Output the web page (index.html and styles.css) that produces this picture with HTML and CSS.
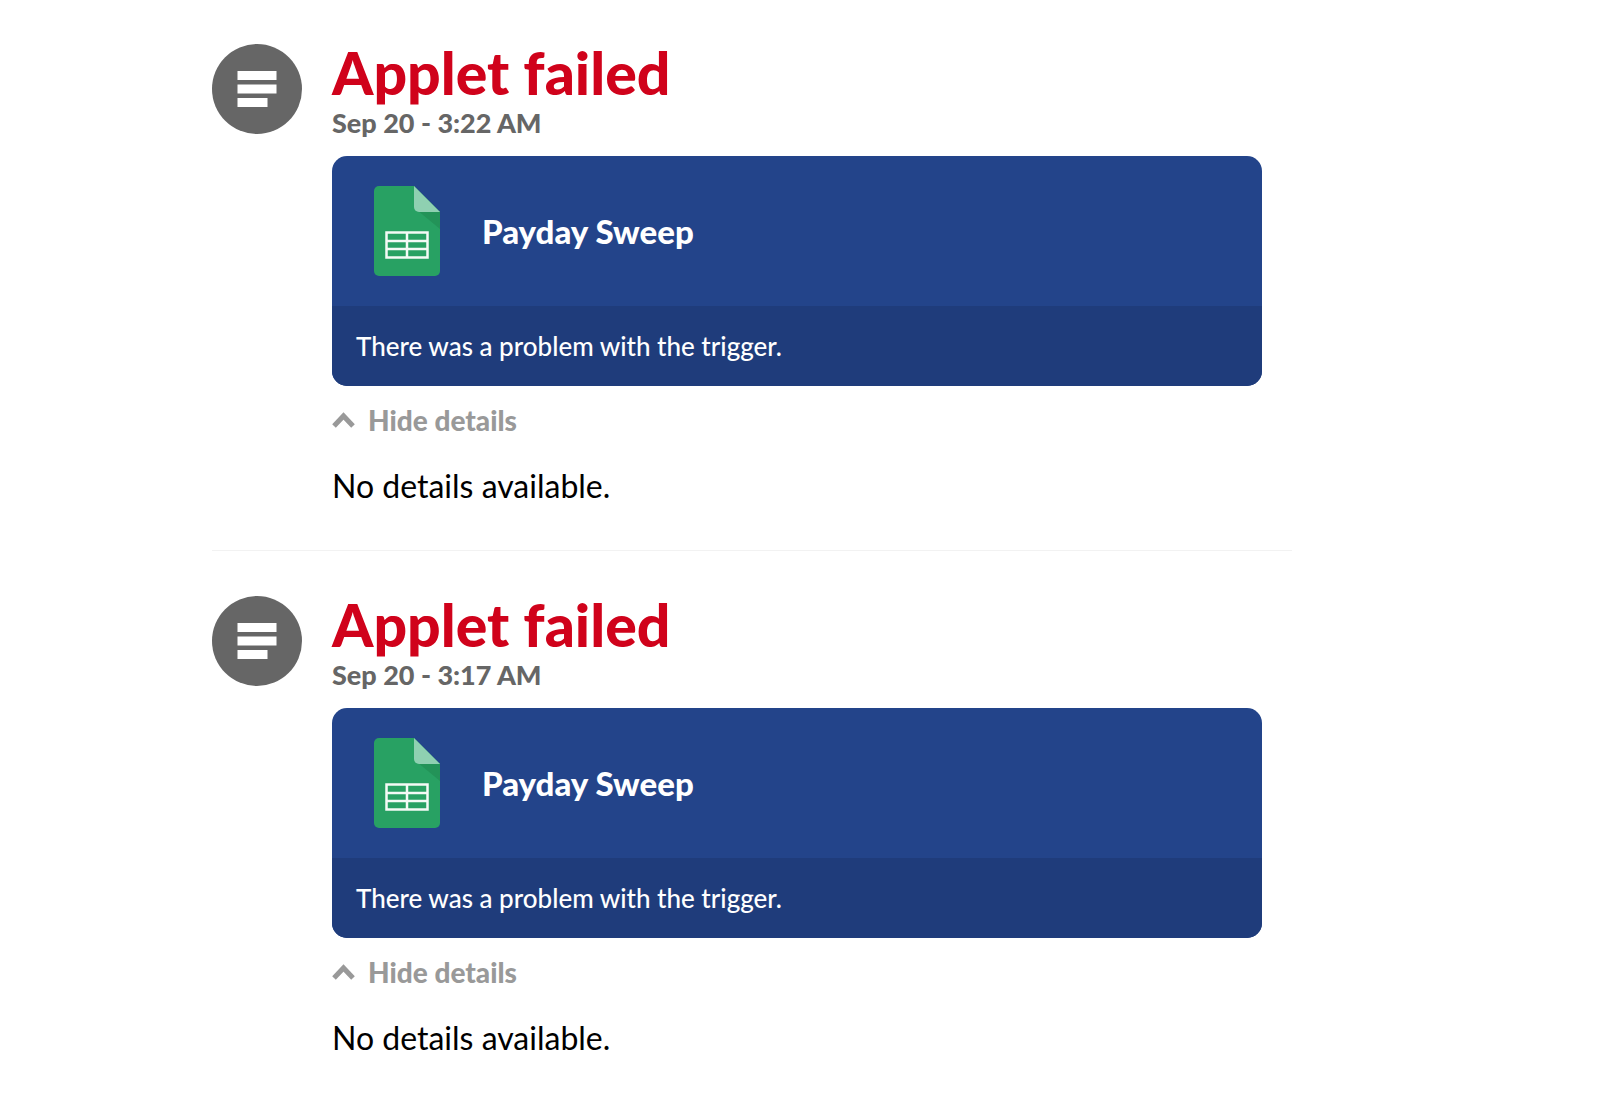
FILE: index.html
```html
<!DOCTYPE html>
<html lang="en">
<head>
    <meta charset="UTF-8">
    <meta name="viewport" content="width=device-width, initial-scale=1.0">
    <title>Activity</title>
    <link rel="stylesheet" href="styles.css">
</head>
<body>
    <main class="feed">
        <article class="item">
            <svg class="item-icon" viewBox="0 0 90 90" aria-hidden="true">
                <circle cx="45" cy="45" r="45" fill="#666"/>
                <path d="M25.500 27h39v9h-39zM25.500 40.500h39v9h-39zM25.500 54h30v9h-30z" fill="#fff"/>
            </svg>
            <div class="item-content">
                <h2 class="title">Applet failed</h2>
                <p class="date">Sep 20 - 3:22 AM</p>
                <section class="card">
                    <div class="card-top">
                        <svg class="sheet" viewBox="0 0 66 90" aria-hidden="true">
                            <path d="M5 0h35l26 26v59a5 5 0 0 1-5 5H5a5 5 0 0 1-5-5V5a5 5 0 0 1 5-5z" fill="#28a163"/>
                            <path d="M43 24l23 19V25H44z" fill="#239358"/>
                            <path d="M40 0l26 26H45a5 5 0 0 1-5-5z" fill="#8fd0b1"/>
                            <path d="M12.500 46.500h41v25h-41zM12 55h42M12 63h42M33 46v26" fill="none" stroke="#f4faf6" stroke-width="2.500"/>
                        </svg>
                        <h3 class="card-title">Payday Sweep</h3>
                    </div>
                    <p class="card-message">There was a problem with the trigger.</p>
                </section>
                <button class="toggle" type="button">
                    <svg class="chevron" viewBox="0 0 24 18" aria-hidden="true">
                        <path d="M2 15l9.500-10 9.500 10" fill="none" stroke="#999" stroke-width="5"/>
                    </svg>
                    <span>Hide details</span>
                </button>
                <p class="details">No details available.</p>
            </div>
        </article>
        <article class="item">
            <svg class="item-icon" viewBox="0 0 90 90" aria-hidden="true">
                <circle cx="45" cy="45" r="45" fill="#666"/>
                <path d="M25.500 27h39v9h-39zM25.500 40.500h39v9h-39zM25.500 54h30v9h-30z" fill="#fff"/>
            </svg>
            <div class="item-content">
                <h2 class="title">Applet failed</h2>
                <p class="date">Sep 20 - 3:17 AM</p>
                <section class="card">
                    <div class="card-top">
                        <svg class="sheet" viewBox="0 0 66 90" aria-hidden="true">
                            <path d="M5 0h35l26 26v59a5 5 0 0 1-5 5H5a5 5 0 0 1-5-5V5a5 5 0 0 1 5-5z" fill="#28a163"/>
                            <path d="M43 24l23 19V25H44z" fill="#239358"/>
                            <path d="M40 0l26 26H45a5 5 0 0 1-5-5z" fill="#8fd0b1"/>
                            <path d="M12.500 46.500h41v25h-41zM12 55h42M12 63h42M33 46v26" fill="none" stroke="#f4faf6" stroke-width="2.500"/>
                        </svg>
                        <h3 class="card-title">Payday Sweep</h3>
                    </div>
                    <p class="card-message">There was a problem with the trigger.</p>
                </section>
                <button class="toggle" type="button">
                    <svg class="chevron" viewBox="0 0 24 18" aria-hidden="true">
                        <path d="M2 15l9.500-10 9.500 10" fill="none" stroke="#999" stroke-width="5"/>
                    </svg>
                    <span>Hide details</span>
                </button>
                <p class="details">No details available.</p>
            </div>
        </article>
    </main>
</body>
</html>
```
FILE: styles.css
```css
* {
    margin: 0;
    padding: 0;
    box-sizing: border-box;
}
body {
    font-family: Lato, "Open Sans", sans-serif;
    background: #fff;
    color: #000;
    padding-right: 103px;
}
.feed {
    max-width: 1080px;
    margin: 0 auto;
}
.item {
    display: flex;
    align-items: flex-start;
    gap: 30px;
    padding: 44px 30px 44px 0;
}
.item + .item {
    border-top: 1px solid #f2f2f2;
    padding-top: 45px;
}
.item-icon {
    width: 90px;
    height: 90px;
    flex-shrink: 0;
}
.item-content {
    flex: 1;
    min-width: 0;
}
.title {
    color: #d0021b;
    font-size: 59px;
    font-weight: 900;
    line-height: 57px;
}
.date {
    color: #666;
    font-size: 27px;
    font-weight: 900;
    line-height: 44px;
    margin-bottom: 11px;
}
.card {
    background: #23448a;
    color: #fff;
    border-radius: 15px;
    overflow: hidden;
}
.card-top {
    display: flex;
    align-items: center;
    gap: 42px;
    padding: 30px 42px;
}
.sheet {
    width: 66px;
    height: 90px;
    flex-shrink: 0;
}
.card-title {
    font-size: 33px;
    font-weight: 900;
    line-height: 40px;
}
.card-message {
    background: #1f3c7b;
    font-size: 26px;
    font-weight: 500;
    line-height: 32px;
    padding: 24px;
}
.toggle {
    display: flex;
    align-items: center;
    gap: 12px;
    margin-top: 16px;
    border: none;
    background: none;
    color: #999;
    font-family: inherit;
    font-size: 28px;
    font-weight: 900;
    line-height: 36px;
    cursor: pointer;
}
.chevron {
    width: 24px;
    height: 18px;
}
.details {
    font-size: 32px;
    line-height: 40px;
    margin-top: 28px;
}
@media (max-width: 800px) {
    body {
        padding: 0 20px;
    }
    .item {
        gap: 16px;
        padding-right: 0;
    }
}
```
